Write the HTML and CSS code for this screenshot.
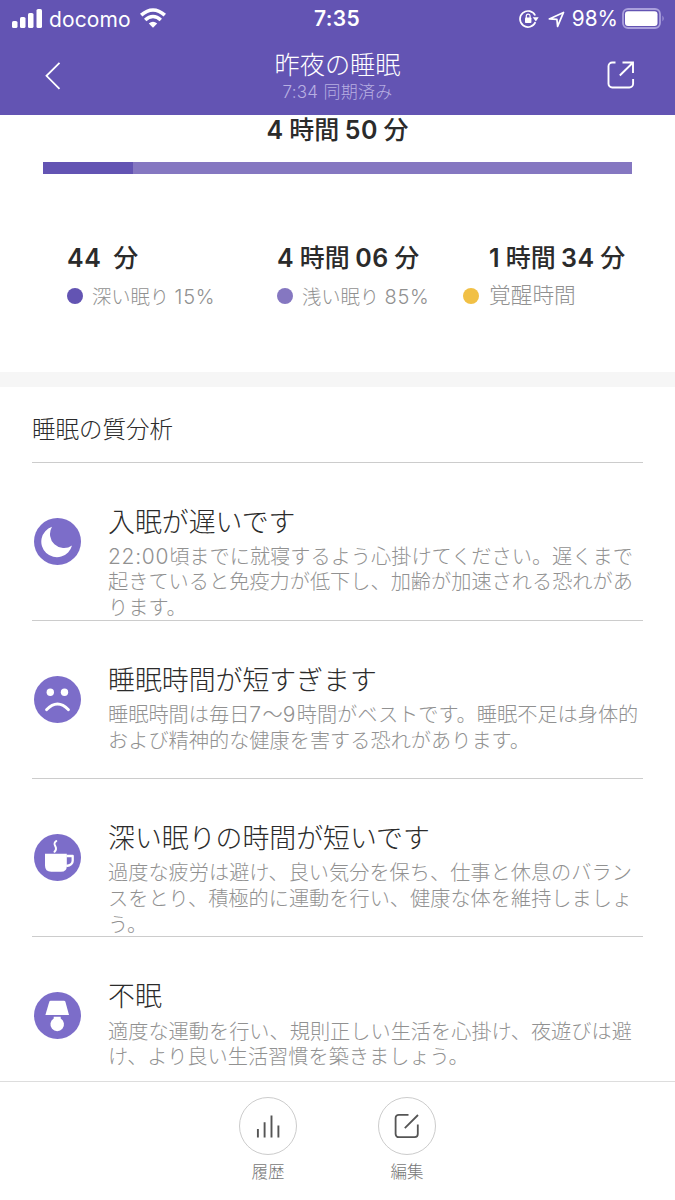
FILE: index.html
```html
<!DOCTYPE html>
<html lang="ja">
<head>
<meta charset="utf-8">
<title>昨夜の睡眠</title>
<link rel="stylesheet" href="styles.css">
</head>
<body>
<div class="screen">
  <header class="header">
    <div class="status">
      <div class="status-left">
        <svg class="signal" width="30" height="19" viewBox="0 0 30 19" fill="#fff"><rect x="0" y="12" width="5.5" height="7" rx="1.6"/><rect x="8" y="8" width="5.5" height="11" rx="1.6"/><rect x="16" y="4" width="5.5" height="15" rx="1.6"/><rect x="24.500" y="0" width="5.500" height="19" rx="1.600"/></svg>
        <span class="carrier">docomo</span>
        <svg class="wifi" width="28" height="20" viewBox="0 0 28 20" fill="none" stroke="#fff"><path d="M2.200 7.200Q8 2 14 2t11.800 5.200" stroke-width="3.600"/><path d="M6.200 12q3.600-3.500 7.800-3.500t7.800 3.500" stroke-width="3.400"/><path d="M9.800 15.400Q14 11.900 18.200 15.400L14 19.700z" fill="#fff" stroke="none"/></svg>
      </div>
      <span class="clock">7:35</span>
      <div class="status-right">
        <svg class="lock" width="20" height="18" viewBox="0 0 20 18" fill="none" stroke="#fff" stroke-width="1.700"><path d="M16.200 5.500A8 8 0 1 0 16.400 12.100"/><path d="M13.700 7.300h6L16.900 11.500z" fill="#fff" stroke="none"/><rect x="6" y="7.500" width="6.400" height="5.500" rx=".8" fill="#fff" stroke="none"/><path d="M7.300 8V6.100a1.900 1.900 0 0 1 3.800 0V8" stroke-width="1.200"/></svg>
        <svg class="arrow" width="17" height="17" viewBox="0 0 17 17" fill="none" stroke="#fff" stroke-width="1.700" stroke-linejoin="round"><path d="M1.300 7.900 15.500 1.400 9.600 15.400 8.900 8.400z"/></svg>
        <span class="percent">98%</span>
        <svg class="battery" width="43" height="21" viewBox="0 0 43 21"><rect x="1" y="1" width="37" height="19" rx="5" fill="none" stroke="#aaa0dc" stroke-width="1.800"/><rect x="3" y="3.200" width="32.500" height="14.800" rx="3" fill="#fff"/><path d="M40.500 7.500q2.300 3 0 6z" fill="#aaa0dc"/></svg>
      </div>
    </div>
    <nav class="nav">
      <svg class="back" width="16" height="28" viewBox="0 0 16 28" fill="none" stroke="#fff" stroke-width="1.800"><path d="M14.500 .8 1.500 13.800 14.500 26.800"/></svg>
      <div class="heading">
        <h1 class="page-title">昨夜の睡眠</h1>
        <div class="synced">7:34 同期済み</div>
      </div>
      <svg class="share" width="28" height="28" viewBox="0 0 28 28" fill="none" stroke="#fff" stroke-width="1.900"><path d="M8.500 1.500H5.200a3.700 3.700 0 0 0-3.700 3.700v17.600a3.700 3.700 0 0 0 3.700 3.700h17.200a3.700 3.700 0 0 0 3.700-3.700V18"/><path d="M15.500 1.500H26V12M25.800 1.700 12.800 14.500"/></svg>
    </nav>
  </header>

  <main class="content">
    <section class="summary">
      <div class="total stat"><b>4</b> 時間 <b>50</b> 分</div>
      <div class="bar"><div class="bar-deep"></div></div>
      <div class="stats">
        <div class="stat-col">
          <div class="stat stat-first"><b>44</b> 分</div>
          <div class="legend"><i class="dot deep"></i><span>深い眠り <span class="share-value">15%</span></span></div>
        </div>
        <div class="stat-col">
          <div class="stat"><b>4</b> 時間 <b>06</b> 分</div>
          <div class="legend"><i class="dot light"></i><span>浅い眠り <span class="share-value">85%</span></span></div>
        </div>
        <div class="stat-col awake-col">
          <div class="stat"><b>1</b> 時間 <b>34</b> 分</div>
          <div class="legend large"><i class="dot awake"></i><span>覚醒時間</span></div>
        </div>
      </div>
    </section>

    <section class="analysis">
      <h2 class="section-title">睡眠の質分析</h2>
      <article class="item">
        <svg class="item-icon" width="48" height="48" viewBox="0.5 0.5 48 48"><circle cx="24" cy="24" r="23.500" fill="#7c6dc9"/><path d="M18.500 9.300A15.600 15.600 0 1 0 38.500 28A14 14 0 0 1 18.500 9.300z" fill="#fff"/></svg>
        <div class="item-text"><h3 class="item-title">入眠が遅いです</h3>
        <p class="item-desc"><span class="digits">22:00</span>頃までに就寝するよう心掛けてください。遅くまで<br>起きていると免疫力が低下し、加齢が加速される恐れがあ<br>ります。</p></div>
      </article>
      <article class="item">
        <svg class="item-icon" width="48" height="48" viewBox="0.5 0.5 48 48"><circle cx="24" cy="24" r="23.500" fill="#7c6dc9"/><circle cx="16.800" cy="16.700" r="3.700" fill="#fff"/><circle cx="31" cy="16.700" r="3.700" fill="#fff"/><path d="M13 34.300q11-11.600 22 0" fill="none" stroke="#fff" stroke-width="2.800" stroke-linecap="round"/></svg>
        <div class="item-text"><h3 class="item-title">睡眠時間が短すぎます</h3>
        <p class="item-desc">睡眠時間は毎日<span class="digits wide">7</span>〜<span class="digits wide">9</span>時間がベストです。睡眠不足は身体的<br>および精神的な健康を害する恐れがあります。</p></div>
      </article>
      <article class="item">
        <svg class="item-icon" width="48" height="48" viewBox="0.5 0.5 48 48"><circle cx="24" cy="24" r="23.500" fill="#7c6dc9"/><path d="M11.500 20.300h21.800v12.200q0 5.800-5.800 5.800H17.700q-6.200 0-6.200-6.200z" fill="#fff"/><path d="M33 22.500h6.200v4.800q0 4.500-6.400 5.200" fill="none" stroke="#fff" stroke-width="2.300" stroke-linejoin="round"/><path d="M22.800 7.500c-5.500 4 3.300 5.600-1.800 10.700" fill="none" stroke="#fff" stroke-width="2" stroke-linecap="round"/></svg>
        <div class="item-text"><h3 class="item-title">深い眠りの時間が短いです</h3>
        <p class="item-desc">過度な疲労は避け、良い気分を保ち、仕事と休息のバラン<br>スをとり、積極的に運動を行い、健康な体を維持しましょ<br>う。</p></div>
      </article>
      <article class="item">
        <svg class="item-icon" width="48" height="48" viewBox="0.5 0.5 48 48"><circle cx="24" cy="24" r="23.500" fill="#7c6dc9"/><path d="M17.200 9.200h13.200q1.200 0 1.500 1l3.600 13.200H11.900l3.900-13.200q.3-1 1.400-1z" fill="#fff"/><path d="M20.200 25.200h7v1.900a6.800 6.800 0 1 1-7 0z" fill="#fff"/></svg>
        <div class="item-text"><h3 class="item-title">不眠</h3>
        <p class="item-desc">適度な運動を行い、規則正しい生活を心掛け、夜遊びは避<br>け、より良い生活習慣を築きましょう。</p></div>
      </article>
    </section>
  </main>

  <footer class="toolbar">
    <div class="action">
      <div class="action-circle"><svg width="24" height="24" viewBox="0 0 24 24" fill="none" stroke="#555" stroke-width="1.900"><path d="M1.900 15v8.500M8.600 8.300v15.200M15.500 1.500v22M22.400 11.500v12"/></svg></div>
      <span class="action-label">履歴</span>
    </div>
    <div class="action">
      <div class="action-circle"><svg width="26" height="26" viewBox="0 0 26 26" fill="none" stroke="#555" stroke-width="1.800"><path d="M14.500 1.800H4.800a3.200 3.200 0 0 0-3.200 3.200v16a3.200 3.200 0 0 0 3.200 3.200h15.800a3.200 3.200 0 0 0 3.200-3.200V11.500M24 2 10.800 15.200"/></svg></div>
      <span class="action-label">編集</span>
    </div>
  </footer>
</div>
</body>
</html>
```
FILE: styles.css
```css
* { box-sizing: border-box; margin: 0; padding: 0; }
body { background: #fff; font-family: Inter, "Noto Sans CJK JP", sans-serif; font-weight: 300; color: #2b2b2b; }
svg { display: block; flex: none; }
.screen { width: 675px; height: 1200px; display: flex; flex-direction: column; overflow: hidden; white-space: nowrap; }

.header { height: 115px; flex: none; background: #6354b3; color: #fff; }
.status { height: 37px; display: grid; grid-template-columns: 1fr auto 1fr; align-items: center; padding: 0 10px 0 12px; }
.status-left, .status-right { display: flex; align-items: center; }
.status-right { justify-content: flex-end; }
.signal { margin-top: -2px; }
.carrier { font-size: 21px; font-weight: 400; letter-spacing: .1px; line-height: 37px; margin-left: 7px; }
.wifi { margin: -2px 0 0 8px; }
.clock { font-size: 21px; font-weight: 600; line-height: 38px; letter-spacing: .3px; margin-right: 3px; }
.arrow { margin-left: 9px; }
.percent { font-size: 20.8px; font-weight: 400; line-height: 38px; margin-left: 7px; }
.battery { margin: -2px 0 0 4px; }
.nav { height: 78px; display: grid; grid-template-columns: 1fr auto 1fr; padding: 0 40px 0 45px; }
.back { margin-top: 25px; }
.heading { text-align: center; padding-top: 10px; margin: 0 5px 0 0; }
.page-title { font-size: 25.2px; font-weight: 300; line-height: 37px; }
.synced { font-size: 17px; line-height: 16px; color: #b8b0e2; letter-spacing: .3px; }
.share { justify-self: end; margin-top: 24px; }

.content { flex: 1; min-height: 0; overflow: hidden; }
.summary { height: 272px; border-bottom: 15px solid #f6f6f6; }
.stat { font-size: 25px; line-height: 32px; font-weight: 500; color: #2b2b2b; word-spacing: -1.200px; }
.stat b { font-size: 25px; font-weight: 600; letter-spacing: .6px; }
.stat-first { word-spacing: 5px; }
.total { text-align: center; line-height: 31px; }
.bar { height: 12px; margin: 16px 43px 0; background: #8577c1; }
.bar-deep { width: 15.2%; height: 100%; background: #6354b3; }
.stats { display: grid; grid-template-columns: 210px 186px auto; margin-top: 68px; padding-left: 67px; }
.awake-col .stat { padding-left: 26px; }
.legend { display: flex; align-items: center; height: 30px; margin-top: 7px; font-size: 19.3px; color: #919191; }
.legend.large { font-size: 21.7px; line-height: 28px; }
.legend.large span { margin-top: -2px; }
.share-value { font-size: 20px; letter-spacing: .7px; }
.dot { width: 16px; height: 16px; border-radius: 50%; margin-right: 9px; }
.deep { background: #6354b3; }
.light { background: #8577c1; }
.awake { background: #f1c045; margin-right: 10px; }

.analysis { padding: 0 32px; }
.section-title { height: 75.500px; font-size: 23.5px; font-weight: 300; line-height: 86px; border-bottom: 1px solid #ccc; }
.item { display: flex; height: 158.300px; border-bottom: 1px solid #ccc; }
.item:last-child { border: 0; }
.item-icon { margin: 55px 26.500px 0 1.500px; }
.item-title { font-size: 26.9px; line-height: 40px; font-weight: 300; margin-top: 39px; }
.item-desc { font-size: 20.2px; line-height: 25.600px; color: #919191; margin-top: 2.300px; }
.digits { font-size: 21px; letter-spacing: .7px; }
.digits.wide { letter-spacing: 1.400px; }

.toolbar { height: 119px; flex: none; display: flex; justify-content: center; gap: 81px; border-top: 1px solid #ddd; background: #fff; padding-top: 15px; }
.action { width: 58px; display: flex; flex-direction: column; align-items: center; }
.action-circle { width: 58px; height: 58px; flex: none; border: 1px solid #ccc; border-radius: 50%; display: flex; align-items: center; justify-content: center; }
.action-label { font-size: 16.5px; line-height: 24px; margin-top: 5px; color: #777; }
```
